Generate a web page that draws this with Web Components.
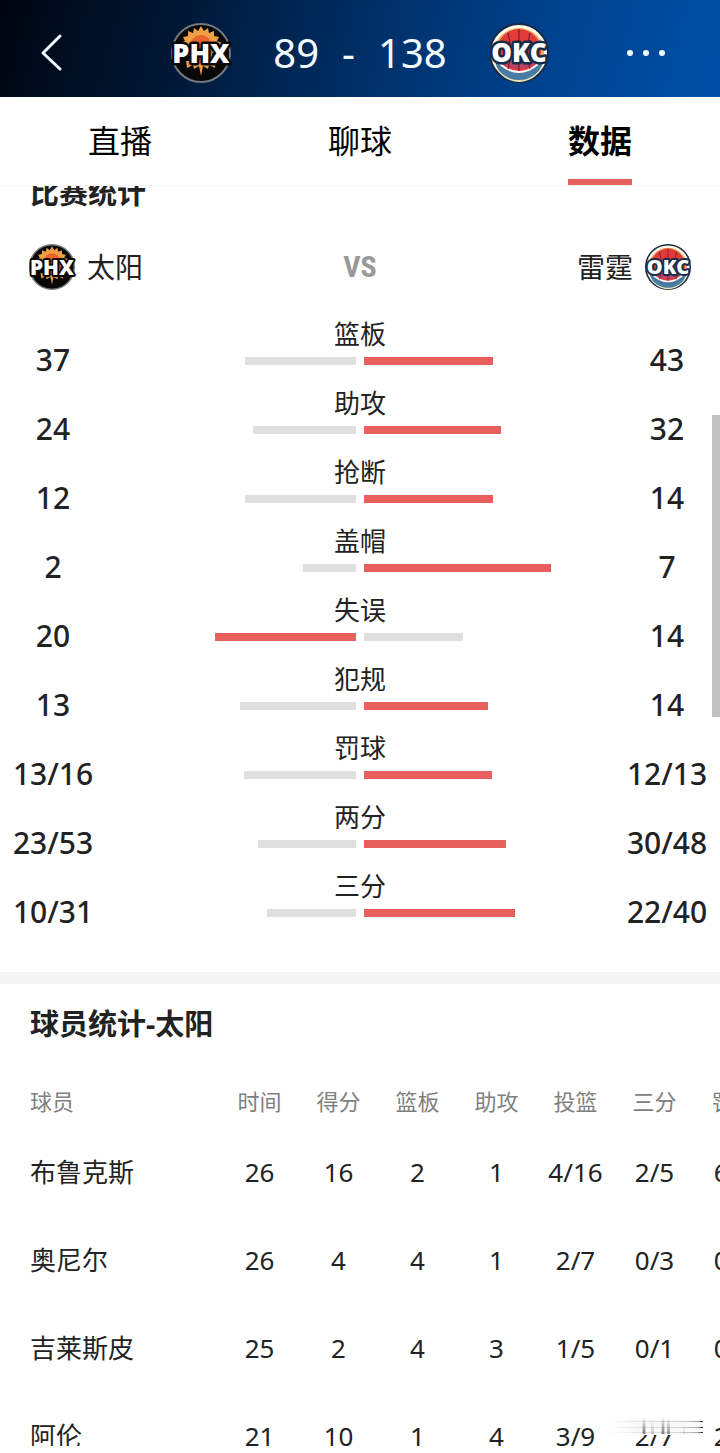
<!DOCTYPE html>
<html lang="zh-CN">

<head>
	<meta charset="UTF-8">
	<meta name="viewport" content="width=device-width, initial-scale=1.0">
	<title>太阳 89 - 138 雷霆</title>
	<style>
		html {
			font-family: "Noto Sans", "Noto Sans CJK SC", sans-serif;
			color: #222;
			background: #fff;
		}

		body {
			margin: 0;
			height: 100vh;
			display: flex;
			flex-direction: column;
		}
	</style>
</head>

<body>
	<bi-fen>
		<dui-hui slot="客" 队="PHX"></dui-hui>
		<span slot="客分">89</span>
		<span slot="主分">138</span>
		<dui-hui slot="主" 队="OKC"></dui-hui>
	</bi-fen>
	<biao-qian 项="直播 聊球 数据" 当前="数据"></biao-qian>
	<gun-dong 位置="33">
		<ban-kuai>
			<span slot="标题">比赛统计</span>
			<dui-zhen>
				<dui-hui slot="客" 队="PHX"></dui-hui>
				<span slot="客">太阳</span>
				<span slot="主">雷霆</span>
				<dui-hui slot="主" 队="OKC"></dui-hui>
			</dui-zhen>
			<dui-bi 客="37" 主="43">篮板</dui-bi>
			<dui-bi 客="24" 主="32">助攻</dui-bi>
			<dui-bi 客="12" 主="14">抢断</dui-bi>
			<dui-bi 客="2" 主="7">盖帽</dui-bi>
			<dui-bi 客="20" 主="14">失误</dui-bi>
			<dui-bi 客="13" 主="14">犯规</dui-bi>
			<dui-bi 客="13/16" 主="12/13">罚球</dui-bi>
			<dui-bi 客="23/53" 主="30/48">两分</dui-bi>
			<dui-bi 客="10/31" 主="22/40">三分</dui-bi>
		</ban-kuai>
		<ban-kuai>
			<span slot="标题">球员统计-太阳</span>
			<qiu-yuan></qiu-yuan>
		</ban-kuai>
	</gun-dong>

	<template id="队徽">
		<style>
			:host {
				display: block;
				width: var(--徽宽, 46px);
				height: var(--徽宽, 46px);
			}

			svg {
				display: block;
				width: 100%;
				height: 100%;
				overflow: visible;
			}

			text {
				font-family: "Open Sans", "Noto Sans", sans-serif;
				font-weight: 800;
				text-anchor: middle;
				fill: #fff;
				paint-order: stroke;
				stroke-linejoin: round;
			}
		</style>
		<svg viewBox="0 0 60 60" role="img"></svg>
	</template>

	<template id="比分">
		<style>
			:host {
				display: block;
				flex: none;
				background: linear-gradient(105deg, #000510 0%, #001530 22%, #002a5c 45%, #003f87 70%, #0050a8 100%);
				color: #f2fbff;
				--徽宽: 60px;
			}

			header {
				display: grid;
				grid-template-columns: 1fr auto 1fr;
				align-items: center;
				height: 89px;
				padding-top: 8px;
			}

			.对阵 {
				display: flex;
				align-items: center;
				gap: 42px;
			}

			.分数 {
				display: flex;
				gap: 23px;
				font-size: 40px;
				line-height: 48px;
			}

			button {
				display: flex;
				padding: 0;
				border: 0;
				background: none;
				color: inherit;
			}

			.返回 {
				margin-left: 40px;
			}

			.更多 {
				justify-self: end;
				margin-right: 54px;
			}
		</style>
		<header>
			<button class="返回" type="button" aria-label="返回">
				<svg width="24" height="40" viewBox="0 0 24 40" fill="none" stroke="currentColor" stroke-width="3" stroke-linecap="round" stroke-linejoin="round">
					<path d="M20 3 3 20l17 16" />
				</svg>
			</button>
			<div class="对阵">
				<slot name="客"></slot>
				<div class="分数">
					<slot name="客分"></slot>
					<span>-</span>
					<slot name="主分"></slot>
				</div>
				<slot name="主"></slot>
			</div>
			<button class="更多" type="button" aria-label="更多">
				<svg width="40" height="8" viewBox="0 0 40 8" fill="currentColor">
					<circle cx="4" cy="4" r="3" />
					<circle cx="20" cy="4" r="3" />
					<circle cx="36" cy="4" r="3" />
				</svg>
			</button>
		</header>
	</template>

	<template id="标签">
		<style>
			:host {
				display: block;
				flex: none;
				border-bottom: 1px solid #f5f5f5;
			}

			nav {
				display: grid;
				grid-auto-flow: column;
				grid-auto-columns: 1fr;
				justify-items: center;
			}

			button {
				padding: 6px 0 0;
				border: 0;
				border-bottom: 6px solid transparent;
				background: none;
				font: inherit;
				font-size: 32px;
				line-height: 76px;
				color: #000;
			}

			[aria-current] {
				border-color: #e5605d;
				font-weight: 700;
			}
		</style>
		<nav></nav>
	</template>

	<template id="滚动">
		<style>
			:host {
				display: flex;
				flex: 1;
				min-height: 0;
				position: relative;
				margin-bottom: 7px;
			}

			main {
				flex: 1;
				min-width: 0;
				overflow-y: auto;
				scrollbar-width: none;
			}

			.滑块 {
				position: absolute;
				right: 0;
				top: 229px;
				width: 8px;
				height: 24%;
				background: #c1c1c1;
			}

			.水印 {
				position: absolute;
				right: 16px;
				bottom: 9px;
			}
		</style>
		<main>
			<slot></slot>
		</main>
		<div class="滑块"></div>
		<svg class="水印" width="96" height="20" viewBox="0 0 96 20" aria-hidden="true">
			<defs>
				<linearGradient id="横">
					<stop offset="0" stop-color="#ddd" stop-opacity="0" />
					<stop offset=".4" stop-color="#ddd" stop-opacity=".8" />
					<stop offset=".8" stop-color="#ccc" />
					<stop offset=".94" stop-color="#aaa" />
					<stop offset="1" stop-color="#222" />
				</linearGradient>
				<linearGradient id="竖" x2="0" y2="1">
					<stop offset="0" stop-color="#aaa" stop-opacity="0" />
					<stop offset="1" stop-color="#777" />
				</linearGradient>
				<linearGradient id="底">
					<stop offset="0" stop-color="#fff" stop-opacity="0" />
					<stop offset=".3" stop-color="#f8f8f8" />
					<stop offset="1" stop-color="#fafafa" />
				</linearGradient>
			</defs>
			<rect y="3" width="96" height="15" fill="url(#底)" />
			<g fill="url(#横)">
				<rect y="4" width="95" height="1" />
				<rect y="10" width="95" height="1" />
				<rect y="15" width="95" height="1" />
			</g>
			<g fill="url(#竖)">
				<rect x="35" width="2" height="17" />
				<rect x="34" width="4" height="17" opacity=".4" />
				<rect x="43" y="2" width="3" height="15" opacity=".4" />
				<rect x="54" width="2" height="17" />
				<rect x="53" width="4" height="17" opacity=".4" />
				<rect x="59" width="3" height="17" opacity=".8" />
				<rect x="75" y="4" width="2" height="13" opacity=".2" />
			</g>
		</svg>
	</template>

	<template id="板块">
		<style>
			:host {
				display: block;
				padding: 20px 0 35px;
			}

			:host(:not(:first-child)) {
				border-top: 12px solid #f4f4f4;
			}

			h2 {
				margin: 0;
				padding: 0 30px;
				font-size: 29px;
				font-weight: 700;
				line-height: 40px;
			}
		</style>
		<h2>
			<slot name="标题"></slot>
		</h2>
		<slot></slot>
	</template>

	<template id="对阵">
		<style>
			:host {
				display: grid;
				grid-template-columns: 1fr auto 1fr;
				align-items: center;
				padding: 31px 29px 26px;
				font-size: 28px;
				line-height: 46px;
			}

			div {
				display: flex;
				gap: 12px;
			}

			.主 {
				justify-content: end;
			}

			.对 {
				font: 700 30px/46px "Roboto Condensed", "Liberation Sans Narrow", "Liberation Sans", sans-serif;
				color: #999;
			}
		</style>
		<div>
			<slot name="客"></slot>
		</div>
		<span class="对">VS</span>
		<div class="主">
			<slot name="主"></slot>
		</div>
	</template>

	<template id="对比">
		<style>
			:host {
				display: grid;
				grid-template-columns: 106px 1fr 106px;
				height: 69px;
				text-align: center;
			}

			.值 {
				padding-top: 24px;
				font-size: 30px;
				font-weight: 500;
				line-height: 40px;
			}

			.名 {
				font-size: 26px;
				line-height: 36px;
			}

			.条 {
				display: grid;
				grid-template-columns: 1fr 1fr;
				gap: 8px;
				padding-top: 5px;
			}

			i {
				height: 8px;
				background: #dfdfdf;
			}

			i:first-child {
				justify-self: end;
			}

			.高 {
				background: #e8605e;
			}
		</style>
		<div class="值"></div>
		<div>
			<div class="名">
				<slot></slot>
			</div>
			<div class="条"><i></i><i></i></div>
		</div>
		<div class="值"></div>
	</template>

	<template id="球员">
		<style>
			:host {
				display: block;
				overflow-x: auto;
				scrollbar-width: none;
				padding-top: 30px;
			}

			table {
				width: 773px;
				table-layout: fixed;
				border-collapse: collapse;
			}

			th,
			td {
				padding: 0;
				font-weight: 400;
			}

			thead {
				font-size: 22px;
				line-height: 54px;
				color: #808080;
			}

			tbody {
				font-size: 26px;
				line-height: 88px;
			}

			th:first-child {
				width: 190px;
				padding-left: 30px;
				text-align: left;
			}

			td {
				text-align: center;
			}
		</style>
		<table>
			<thead></thead>
			<tbody></tbody>
		</table>
	</template>

	<script>
		const $ = (选择器, 起始节点 = document) => 起始节点.querySelectorAll(选择器);

		class 组件 extends HTMLElement {
			constructor() {
				super();
				this.S = this.attachShadow({ mode: "open" });
				this.S.append($("#" + this.constructor.模板)[0].content.cloneNode(true));
			}
		}

		const 徽图 = {
			PHX: `
				<circle cx="30" cy="30" r="29" fill="#080808" stroke="#74787f" stroke-width="2"/>
				<path fill="#f0a044" d="m30 3 3 5 4-3 1 5 5-2v5l5 1-2 4 5 2-4 4 4 3-5 3H14l-5-3 4-3-4-4 5-2-2-4 5-1V8l5 2 1-5 4 3z"/>
				<path fill="#e8642c" d="M19 24a11 12 0 0 1 22 0v14H19z"/>
				<path fill="#e59a4a" d="m15 38 1 7 6-3 1 4 5-3 2 10 2-10 5 3 1-4 6 3 1-7z"/>
				<text x="30" y="40" font-size="27" stroke="#080808" stroke-width="5">PHX</text>`,
			OKC: `
				<circle cx="30" cy="30" r="29" fill="#fffbea" stroke="#172c49" stroke-width="2"/>
				<circle cx="30" cy="30" r="25" fill="#f0ab62"/>
				<path fill="#e6e3b8" d="M5 34a25 25 0 0 0 50 0z"/>
				<path fill="#487ca4" d="M6 36a24 21 0 0 0 48 0z"/>
				<circle cx="30" cy="28" r="22" fill="#e23a38"/>
				<path fill="#b9446a" d="M9 35a22 15 0 0 0 42 0z"/>
				<path fill="none" stroke="#fff" stroke-width="2" d="M11 41q19 16 38 0"/>
				<path fill="none" stroke="#6b1530" stroke-width="1" d="M30 6v42M19 10q5 18 0 36M41 10q-5 18 0 36"/>
				<text x="30" y="39" font-size="26" stroke="#172c49" stroke-width="5">OKC</text>`
		};

		customElements.define("dui-hui", class extends 组件 {
			static 模板 = "队徽";
			connectedCallback() {
				const 图 = $("svg", this.S)[0];
				图.setAttribute("aria-label", this.getAttribute("队"));
				图.innerHTML = 徽图[this.getAttribute("队")];
			}
		});

		customElements.define("bi-fen", class extends 组件 {
			static 模板 = "比分";
		});

		customElements.define("biao-qian", class extends 组件 {
			static 模板 = "标签";
			connectedCallback() {
				for (const 项 of this.getAttribute("项").split(" ")) {
					const 钮 = document.createElement("button");
					钮.type = "button";
					钮.textContent = 项;
					if (项 === this.getAttribute("当前")) 钮.setAttribute("aria-current", "page");
					$("nav", this.S)[0].append(钮);
				}
			}
		});

		customElements.define("ban-kuai", class extends 组件 {
			static 模板 = "板块";
		});

		customElements.define("dui-zhen", class extends 组件 {
			static 模板 = "对阵";
		});

		customElements.define("dui-bi", class extends 组件 {
			static 模板 = "对比";
			// "13/16" 按命中率比较，其余按数值
			static 求值(文) {
				const [中, 投 = 1] = 文.split("/").map(Number);
				return 中 / 投;
			}
			connectedCallback() {
				const 文 = [this.getAttribute("客"), this.getAttribute("主")];
				const 值 = 文.map(this.constructor.求值);
				const 条 = $("i", this.S);
				$(".值", this.S).forEach((元素, 序) => {
					元素.textContent = 文[序];
					条[序].style.width = 值[序] / (值[0] + 值[1]) * 96 + "%";
					条[序].classList.toggle("高", 值[序] > 值[1 - 序]);
				});
			}
		});

		customElements.define("qiu-yuan", class extends 组件 {
			static 模板 = "球员";
			static 表头 = ["球员", "时间", "得分", "篮板", "助攻", "投篮", "三分", "罚球"];
			static 数据 = [
				["布鲁克斯", 26, 16, 2, 1, "4/16", "2/5", "6/6"],
				["奥尼尔", 26, 4, 4, 1, "2/7", "0/3", "0/0"],
				["吉莱斯皮", 25, 2, 4, 3, "1/5", "0/1", "0/0"],
				["阿伦", 21, 10, 1, 4, "3/9", "2/7", "2/2"]
			];
			connectedCallback() {
				const { 表头, 数据 } = this.constructor;
				$("thead", this.S)[0].innerHTML = `<tr>${表头.map(名 => `<th scope="col">${名}</th>`).join("")}</tr>`;
				$("tbody", this.S)[0].innerHTML = 数据.map(([名, ...值]) =>
					`<tr><th scope="row">${名}</th>${值.map(v => `<td>${v}</td>`).join("")}</tr>`).join("");
			}
		});

		customElements.define("gun-dong", class extends 组件 {
			static 模板 = "滚动";
			connectedCallback() {
				$("main", this.S)[0].scrollTop = this.getAttribute("位置");
			}
		});
	</script>
</body>

</html>
